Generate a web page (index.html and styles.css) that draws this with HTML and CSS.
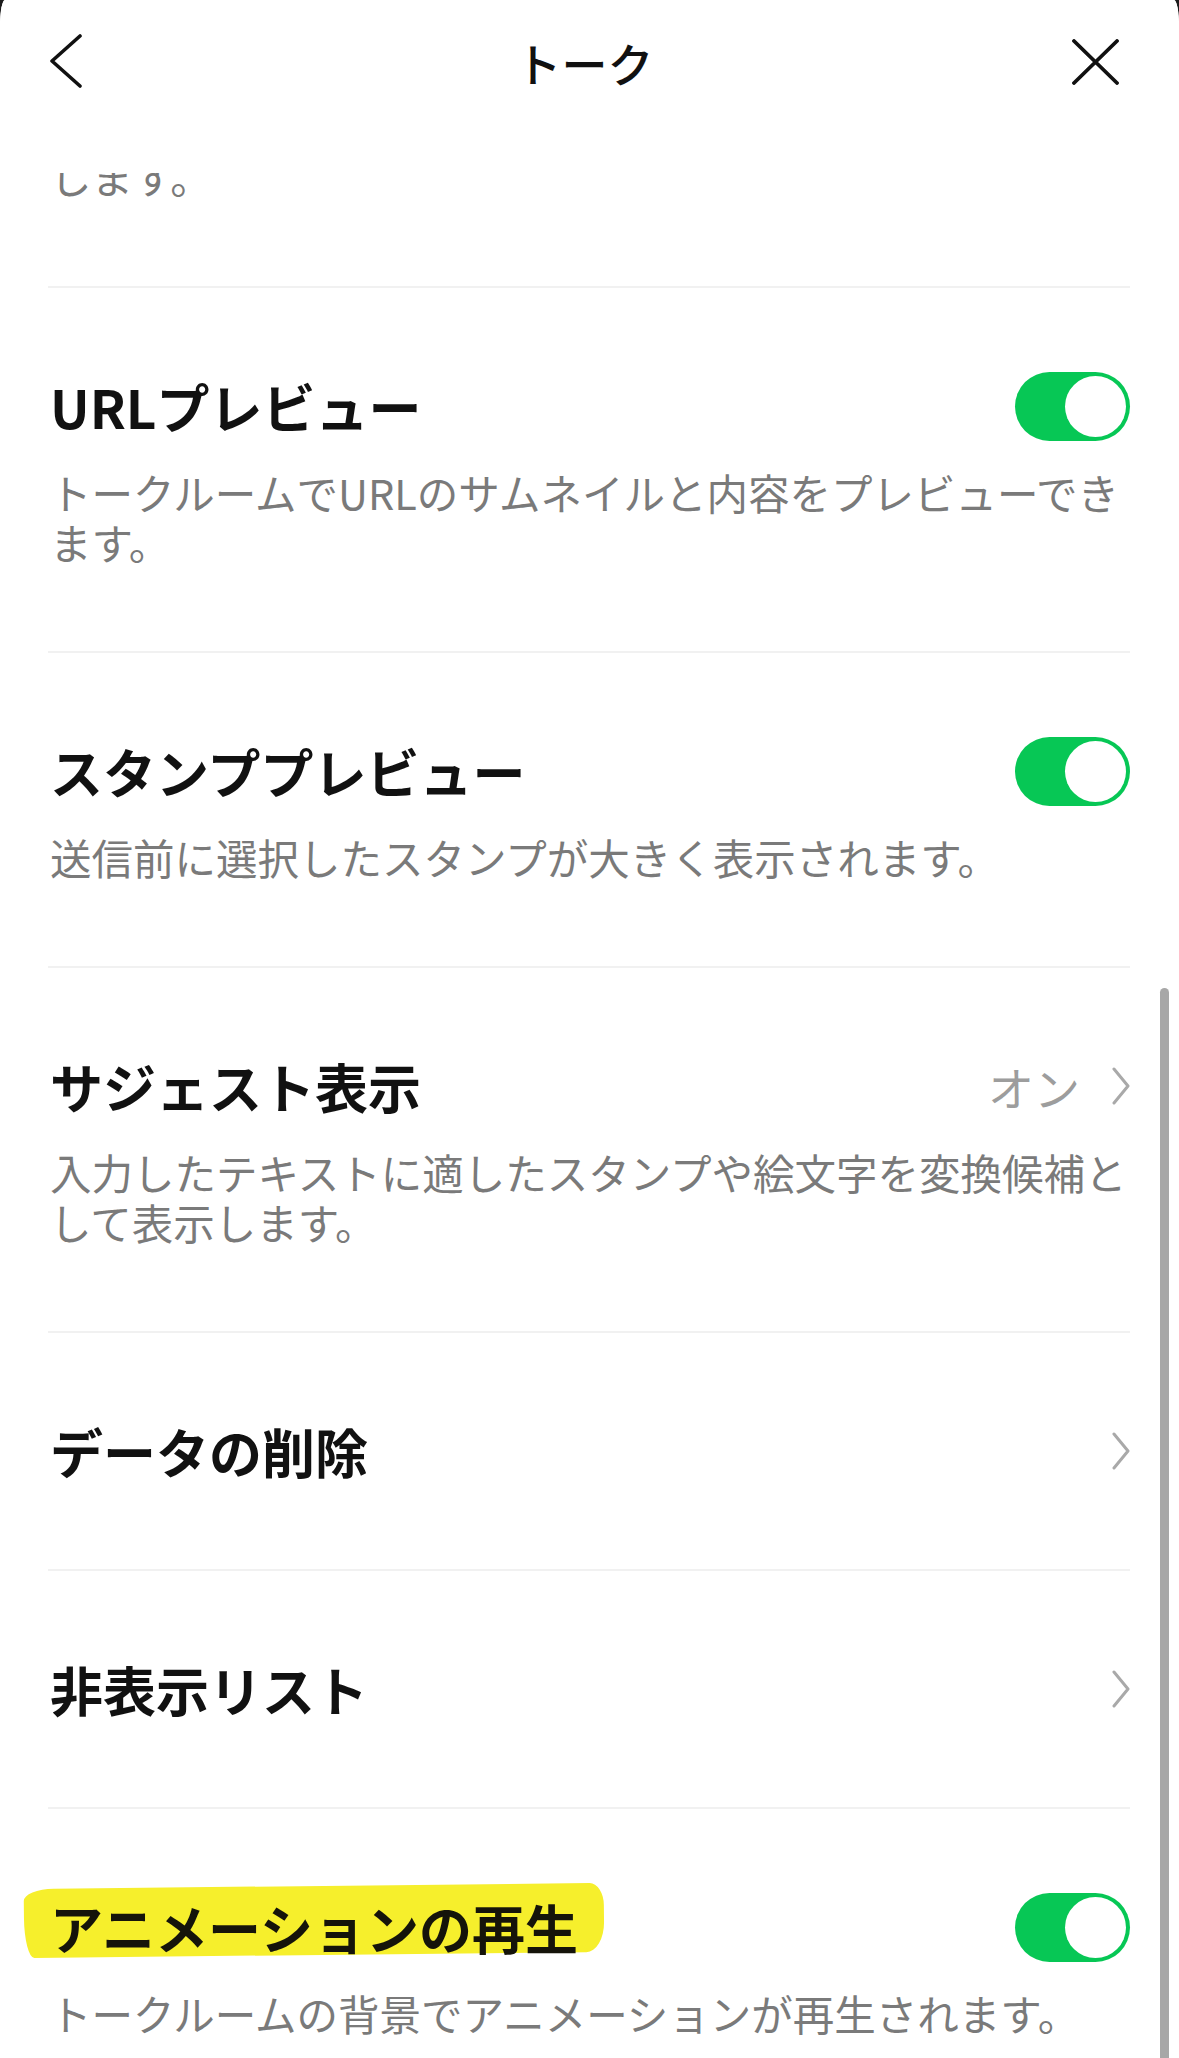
FILE: index.html
```html
<!DOCTYPE html>
<html lang="ja">
<head>
<meta charset="utf-8">
<title>トーク</title>
<link rel="stylesheet" href="styles.css">
</head>
<body>
<div class="sheet">
  <header class="header">
    <div class="hdr-left">
      <svg class="icon-back" width="34" height="56" viewBox="0 0 34 56"><path d="M30 2 L2 27 L30 52" fill="none" stroke="#111" stroke-width="3.6" stroke-linecap="round" stroke-linejoin="round"/></svg>
    </div>
    <h1 class="hdr-title">トーク</h1>
    <div class="hdr-right">
      <svg class="icon-close" width="47" height="46" viewBox="0 0 47 46"><path d="M2 2 L45 44 M45 2 L2 44" fill="none" stroke="#111" stroke-width="3.8" stroke-linecap="round"/></svg>
    </div>
  </header>

  <div class="viewport">
    <div class="list">
      <div class="row row-partial">
        <p class="desc">します。</p>
      </div>

      <div class="row">
        <div class="row-head">
          <span class="title">URLプレビュー</span>
          <span class="toggle on"><span class="knob"></span></span>
        </div>
        <p class="desc">トークルームでURLのサムネイルと内容をプレビューできます。</p>
      </div>

      <div class="row">
        <div class="row-head">
          <span class="title">スタンププレビュー</span>
          <span class="toggle on"><span class="knob"></span></span>
        </div>
        <p class="desc">送信前に選択したスタンプが大きく表示されます。</p>
      </div>

      <div class="row">
        <div class="row-head">
          <span class="title">サジェスト表示</span>
          <span class="value">
            <span class="value-text">オン</span>
            <svg class="chev" width="18" height="38" viewBox="0 0 18 38"><path d="M2 2 L16 19 L2 36" fill="none" stroke="#a9a9a9" stroke-width="3" stroke-linecap="round" stroke-linejoin="round"/></svg>
          </span>
        </div>
        <p class="desc">入力したテキストに適したスタンプや絵文字を変換候補として表示します。</p>
      </div>

      <div class="row row-plain">
        <div class="row-head">
          <span class="title">データの削除</span>
          <svg class="chev" width="18" height="38" viewBox="0 0 18 38"><path d="M2 2 L16 19 L2 36" fill="none" stroke="#a9a9a9" stroke-width="3" stroke-linecap="round" stroke-linejoin="round"/></svg>
        </div>
      </div>

      <div class="row row-plain">
        <div class="row-head">
          <span class="title">非表示リスト</span>
          <svg class="chev" width="18" height="38" viewBox="0 0 18 38"><path d="M2 2 L16 19 L2 36" fill="none" stroke="#a9a9a9" stroke-width="3" stroke-linecap="round" stroke-linejoin="round"/></svg>
        </div>
      </div>

      <div class="row">
        <div class="row-head">
          <span class="title marked"><span class="marker"></span><span class="marked-text">アニメーションの再生</span></span>
          <span class="toggle on"><span class="knob"></span></span>
        </div>
        <p class="desc">トークルームの背景でアニメーションが再生されます。</p>
      </div>
    </div>
    <div class="scrollbar"></div>
  </div>
</div>
</body>
</html>
```

FILE: styles.css
```css
* { box-sizing: border-box; }

html, body {
  margin: 0;
  padding: 0;
  background: #1c1c1c;
}

body {
  font-family: "Noto Sans CJK JP", "Noto Sans", sans-serif;
  color: #111;
}

.sheet {
  width: 1179px;
  height: 2058px;
  background: #fff;
  border-top-left-radius: 5px 26px;
  border-top-right-radius: 5px 26px;
  overflow: hidden;
  display: flex;
  flex-direction: column;
}

/* Header */
.header {
  flex: 0 0 173px;
  height: 173px;
  padding: 0 60px 49px 50px;
  display: grid;
  grid-template-columns: 1fr auto 1fr;
  align-items: center;
  background: #fff;
  position: relative;
  z-index: 2;
}

.hdr-left { display: flex; justify-content: flex-start; }
.hdr-right { display: flex; justify-content: flex-end; }

.icon-back, .icon-close { display: block; }

.hdr-title {
  margin: 0;
  font-size: 46px;
  font-weight: 500;
  line-height: 60px;
  color: #111;
  letter-spacing: 0;
}

/* Scrolling content */
.viewport {
  flex: 1 1 auto;
  position: relative;
  overflow: hidden;
}

.list {
  margin-top: -22px;
  padding: 0 49px 0 48px;
}

.row {
  padding: 83px 0 84px 2px;
  border-bottom: 2px solid #f1f1f1;
}

.row-partial {
  padding: 0 0 85px 2px;
}

.row-plain {
  padding: 83px 0 83px 2px;
}

.row-head {
  height: 70px;
  display: flex;
  align-items: center;
  justify-content: space-between;
}

.title {
  font-size: 53px;
  font-weight: 700;
  line-height: 70px;
  color: #111;
  white-space: nowrap;
}

.desc {
  margin: 26px -12px 0 0;
  font-size: 41.5px;
  line-height: 50px;
  font-weight: 400;
  color: #7a7a7a;
}

.row-partial .desc { margin-top: 0; }

/* Toggle */
.toggle {
  width: 115px;
  height: 69px;
  border-radius: 35px;
  background: #cfcfcf;
  padding: 4px;
  display: flex;
  justify-content: flex-start;
  flex: 0 0 auto;
}

.toggle.on {
  background: #07c755;
  justify-content: flex-end;
}

.knob {
  width: 61px;
  height: 61px;
  border-radius: 50%;
  background: #fff;
}

/* Value + chevron */
.value {
  display: flex;
  align-items: center;
  gap: 32px;
}

.value-text {
  font-size: 46px;
  line-height: 70px;
  font-weight: 400;
  color: #9d9d9d;
}

.chev { display: block; flex: 0 0 auto; }

/* Highlighter mark */
.marked {
  position: relative;
  display: inline-block;
}

.marked-text {
  position: relative;
  z-index: 1;
  color: #15140a;
}

.marker {
  position: absolute;
  left: -26px;
  top: -6px;
  width: 580px;
  height: 69px;
  background: #f6ef2c;
  border-radius: 30px 14px 18px 10px / 12px 22px 30px 40px;
  transform: rotate(-0.6deg);
  z-index: 0;
}

/* Scrollbar */
.scrollbar {
  position: absolute;
  left: 1160px;
  top: 815px;
  width: 9px;
  bottom: 0;
  background: #a7a7a7;
  border-radius: 5px 5px 0 0;
}
```
